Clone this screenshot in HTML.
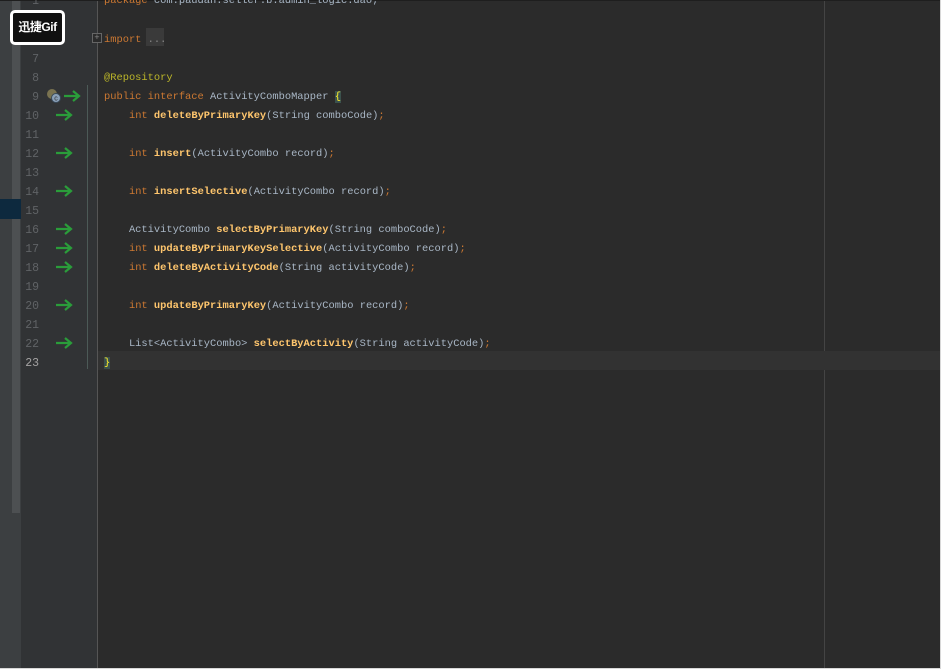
<!DOCTYPE html>
<html><head><meta charset="utf-8"><style>
*{margin:0;padding:0;box-sizing:border-box}
body{width:941px;height:669px;overflow:hidden;background:#2b2b2b;position:relative;font-family:"Liberation Mono",monospace;font-size:10.4px}
.abs{position:absolute}
.row{position:absolute;left:104px;height:19px;line-height:19px;white-space:pre;color:#a9b7c6;margin-top:2px}
.ln{position:absolute;left:18px;width:21px;text-align:right;height:19px;line-height:19px;color:#606366;font-size:11.5px;margin-top:2px}
.k{color:#cc7832}.m{color:#ffc66d;font-weight:bold}.a{color:#bbb529}
.arr{position:absolute;left:55px;width:18px;height:12px}
</style></head><body>
<div class="abs" style="left:0;top:0;width:21px;height:669px;background:#3c3f41"></div>
<div class="abs" style="left:12px;top:0;width:8px;height:513px;background:#4d5052"></div>
<div class="abs" style="left:0;top:199px;width:21px;height:20px;background:#0d293e"></div>
<div class="abs" style="left:21px;top:0;width:76px;height:669px;background:#313335"></div>
<div class="abs" style="left:97px;top:0;width:1px;height:669px;background:#555"></div>
<div class="abs" style="left:824px;top:0;width:1px;height:669px;background:#444"></div>
<div class="abs" style="left:87px;top:85px;width:1px;height:284px;background:#4c5a57"></div>
<div class="abs" style="left:98px;top:351px;width:842px;height:19px;background:#323232"></div>
<div class="abs" style="left:0;top:0;width:941px;height:1px;background:#1e1e1e"></div>
<div class="abs" style="left:940px;top:0;width:1px;height:669px;background:#d8d8d8"></div>
<div class="abs" style="left:0;top:668px;width:941px;height:1px;background:#d8d8d8"></div>

<div class="ln" style="top:-10px">1</div>
<div class="ln" style="top:29px">3</div>
<div class="ln" style="top:48px">7</div>
<div class="ln" style="top:67px">8</div>
<div class="ln" style="top:86px">9</div>
<div class="ln" style="top:105px">10</div>
<div class="ln" style="top:124px">11</div>
<div class="ln" style="top:143px">12</div>
<div class="ln" style="top:162px">13</div>
<div class="ln" style="top:181px">14</div>
<div class="ln" style="top:200px">15</div>
<div class="ln" style="top:219px">16</div>
<div class="ln" style="top:238px">17</div>
<div class="ln" style="top:257px">18</div>
<div class="ln" style="top:276px">19</div>
<div class="ln" style="top:295px">20</div>
<div class="ln" style="top:314px">21</div>
<div class="ln" style="top:333px">22</div>
<div class="ln" style="top:352px;color:#a4a3a3">23</div>

<svg class="abs" style="left:46px;top:88px" width="16" height="16"><circle cx="6" cy="6" r="5" fill="#7a7350"/><circle cx="10" cy="10" r="4.5" fill="#8aa0b8" stroke="#394a5a"/><text x="10" y="12.5" font-size="7" text-anchor="middle" fill="#2b2b2b" font-family="Liberation Sans">c</text></svg>
<svg class="arr" style="left:63px;top:90px" viewBox="0 0 18 12"><path d="M1 6H16M10 1L16 6L10 11" stroke="#2a9d3a" stroke-width="2.2" fill="none"/></svg>
<svg class="arr" style="top:109px" viewBox="0 0 18 12"><path d="M1 6H16M10 1L16 6L10 11" stroke="#2a9d3a" stroke-width="2.2" fill="none"/></svg>
<svg class="arr" style="top:147px" viewBox="0 0 18 12"><path d="M1 6H16M10 1L16 6L10 11" stroke="#2a9d3a" stroke-width="2.2" fill="none"/></svg>
<svg class="arr" style="top:185px" viewBox="0 0 18 12"><path d="M1 6H16M10 1L16 6L10 11" stroke="#2a9d3a" stroke-width="2.2" fill="none"/></svg>
<svg class="arr" style="top:223px" viewBox="0 0 18 12"><path d="M1 6H16M10 1L16 6L10 11" stroke="#2a9d3a" stroke-width="2.2" fill="none"/></svg>
<svg class="arr" style="top:242px" viewBox="0 0 18 12"><path d="M1 6H16M10 1L16 6L10 11" stroke="#2a9d3a" stroke-width="2.2" fill="none"/></svg>
<svg class="arr" style="top:261px" viewBox="0 0 18 12"><path d="M1 6H16M10 1L16 6L10 11" stroke="#2a9d3a" stroke-width="2.2" fill="none"/></svg>
<svg class="arr" style="top:299px" viewBox="0 0 18 12"><path d="M1 6H16M10 1L16 6L10 11" stroke="#2a9d3a" stroke-width="2.2" fill="none"/></svg>
<svg class="arr" style="top:337px" viewBox="0 0 18 12"><path d="M1 6H16M10 1L16 6L10 11" stroke="#2a9d3a" stroke-width="2.2" fill="none"/></svg>

<div class="abs" style="left:92px;top:33px;width:10px;height:10px;border:1px solid #666;color:#888;font-size:9px;line-height:8px;text-align:center;background:#2b2b2b">+</div>
<div class="abs" style="left:146px;top:28px;width:18px;height:18px;background:#3a3a3a"></div>

<div class="row" style="top:-10px"><span class="k">package</span> com.paudan.seller.b.admin_logic.dao;</div>
<div class="row" style="top:29px"><span class="k">import</span> <span style="color:#888">...</span></div>
<div class="row a" style="top:67px">@Repository</div>
<div class="row" style="top:86px"><span class="k">public interface</span> ActivityComboMapper <span style="background:#3b514d;color:#ffef28">{</span></div>
<div class="row" style="top:105px">    <span class="k">int</span> <span class="m">deleteByPrimaryKey</span>(String comboCode)<span class="k">;</span></div>
<div class="row" style="top:143px">    <span class="k">int</span> <span class="m">insert</span>(ActivityCombo record)<span class="k">;</span></div>
<div class="row" style="top:181px">    <span class="k">int</span> <span class="m">insertSelective</span>(ActivityCombo record)<span class="k">;</span></div>
<div class="row" style="top:219px">    ActivityCombo <span class="m">selectByPrimaryKey</span>(String comboCode)<span class="k">;</span></div>
<div class="row" style="top:238px">    <span class="k">int</span> <span class="m">updateByPrimaryKeySelective</span>(ActivityCombo record)<span class="k">;</span></div>
<div class="row" style="top:257px">    <span class="k">int</span> <span class="m">deleteByActivityCode</span>(String activityCode)<span class="k">;</span></div>
<div class="row" style="top:295px">    <span class="k">int</span> <span class="m">updateByPrimaryKey</span>(ActivityCombo record)<span class="k">;</span></div>
<div class="row" style="top:333px">    List&lt;ActivityCombo&gt; <span class="m">selectByActivity</span>(String activityCode)<span class="k">;</span></div>
<div class="row" style="top:352px"><span style="background:#3b514d;color:#ffef28">}</span></div>

<div class="abs" style="left:10px;top:10px;width:55px;height:35px;border:3px solid #fff;border-radius:5px;background:#111;color:#fff;font-family:'Liberation Sans','Noto Sans CJK SC',sans-serif;font-weight:bold;font-size:12px;line-height:29px;text-align:center;letter-spacing:-0.5px">迅捷Gif</div>
</body></html>
